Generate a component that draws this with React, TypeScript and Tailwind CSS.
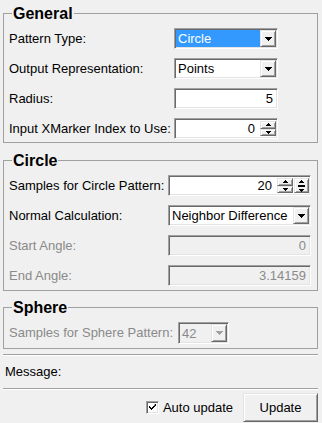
import React from "react";

const sunken =
  "border border-t-[#a0a0a0] border-l-[#a0a0a0] border-b-white border-r-white shadow-[inset_1px_1px_0_#696969,inset_-1px_-1px_0_#e3e3e3]";
const raised =
  "border border-t-[#e3e3e3] border-l-[#e3e3e3] border-b-[#696969] border-r-[#696969] shadow-[inset_1px_1px_0_#ffffff,inset_-1px_-1px_0_#a0a0a0] bg-[#f0f0f0]";

function Down({ color = "#000" }: { color?: string }) {
  return (
    <svg width="7" height="4" viewBox="0 0 7 4" className="block">
      <path d="M0 0h7v1h-1v1h-1v1h-1v1h-1v-1h-1v-1h-1v-1h-1z" fill={color} />
    </svg>
  );
}

function Tri({ up }: { up?: boolean }) {
  return (
    <svg width="5" height="3" viewBox="0 0 5 3" className="block">
      {up ? (
        <path d="M2 0h1v1h1v1h1v1h-5v-1h1v-1h1z" fill="#000" />
      ) : (
        <path d="M0 0h5v1h-1v1h-1v1h-1v-1h-1v-1h-1z" fill="#000" />
      )}
    </svg>
  );
}

function Combo({
  value,
  selected,
  disabled,
  w,
}: {
  value: string;
  selected?: boolean;
  disabled?: boolean;
  w: string;
}) {
  return (
    <div className={`${sunken} ${w} h-[21px] flex p-px ${disabled ? "bg-[#f0f0f0]" : "bg-white"}`}>
      <div
        className={`flex-1 flex items-center pl-[2px] leading-none ${
          selected ? "bg-[#3399ff] text-white" : disabled ? "text-[#8a8a8a]" : "text-black"
        }`}
      >
        {value}
      </div>
      <div className={`${raised} w-[16px] flex items-center justify-center`}>
        <Down color={disabled ? "#a0a0a0" : "#000"} />
      </div>
    </div>
  );
}

function Field({ value, disabled, w, children }: { value: string; disabled?: boolean; w: string; children?: React.ReactNode }) {
  return (
    <div className={`${sunken} ${w} h-[21px] flex p-px ${disabled ? "bg-[#f0f0f0]" : "bg-white"}`}>
      <div
        className={`flex-1 flex items-center justify-end pr-[3px] leading-none ${
          disabled ? "text-[#8a8a8a]" : "text-black"
        }`}
      >
        {value}
      </div>
      {children}
    </div>
  );
}

function Spin() {
  return (
    <div className="w-[16px] flex flex-col my-px ml-[2px]">
      <div className={`${raised} flex-1 flex items-center justify-center`}>
        <Tri up />
      </div>
      <div className={`${raised} flex-1 flex items-center justify-center`}>
        <Tri />
      </div>
    </div>
  );
}

function Spin2() {
  return (
    <div className={`${raised} w-[15px] my-px ml-px flex flex-col items-center justify-center gap-[2px]`}>
      <Tri up />
      <div className="w-[7px] h-[2px] bg-black" />
      <Tri />
    </div>
  );
}

function Group({ title, children, className = "" }: { title: string; children: React.ReactNode; className?: string }) {
  return (
    <fieldset className={`border border-[#a0a0a0] ${className}`}>
      <legend className="ml-[8px] px-[1px] text-[16px] font-bold leading-[17px] text-black">{title}</legend>
      {children}
    </fieldset>
  );
}

function Label({ children, disabled }: { children: React.ReactNode; disabled?: boolean }) {
  return (
    <div className={`h-[21px] flex items-center whitespace-nowrap ${disabled ? "text-[#8a8a8a]" : "text-black"}`}>
      {children}
    </div>
  );
}

export default function App() {
  return (
    <div className="w-[322px] h-[423px] overflow-hidden bg-[#f0f0f0] pl-[3px] pr-[4px] pt-[5px] flex flex-col text-[13px] font-['Liberation_Sans',Arial,sans-serif]">
      <Group title="General">
        <div className="pt-[6px] pl-[5px] pb-[3px] grid grid-cols-[165px_104px] gap-y-[9px]">
          <Label>Pattern Type:</Label>
          <Combo value="Circle" selected w="w-[104px]" />
          <Label>Output Representation:</Label>
          <Combo value="Points" w="w-[104px]" />
          <Label>Radius:</Label>
          <Field value="5" w="w-[104px]" />
          <Label>Input XMarker Index to Use:</Label>
          <Field value="0" w="w-[104px]">
            <Spin />
          </Field>
        </div>
      </Group>

      <Group title="Circle" className="mt-[9px]">
        <div className="pt-[6px] pl-[5px] pb-[4px] grid grid-cols-[159px_143px] gap-y-[9px]">
          <Label>Samples for Circle Pattern:</Label>
          <Field value="20" w="w-[143px]">
            <Spin />
            <Spin2 />
          </Field>
          <Label>Normal Calculation:</Label>
          <Combo value="Neighbor Difference" w="w-[143px]" />
          <Label disabled>Start Angle:</Label>
          <Field value="0" disabled w="w-[143px]" />
          <Label disabled>End Angle:</Label>
          <Field value="3.14159" disabled w="w-[143px]" />
        </div>
      </Group>

      <Group title="Sphere" className="mt-[8px]">
        <div className="pt-[6px] pl-[5px] pb-[4px] grid grid-cols-[169px_51px] items-center">
          <Label disabled>Samples for Sphere Pattern:</Label>
          <div className="h-[22px] flex">
            <Combo value="42" disabled w="w-[51px] !h-[22px]" />
          </div>
        </div>
      </Group>

      <div className="mt-[5px] border-t border-t-[#a0a0a0] border-b border-b-white" />
      <div className="h-[32px] flex items-center pl-[2px] text-black">Message:</div>
      <div className="border-t border-t-[#a0a0a0] border-b border-b-white" />

      <div className="mt-[3px] flex items-center justify-end gap-[10px]">
        <label className="flex items-center gap-[4px] text-black">
          <span className={`${sunken} w-[13px] h-[13px] bg-white flex items-center justify-center`}>
            <svg width="7" height="7" viewBox="0 0 7 7" className="block">
              <path d="M6 0h1v2h-1v1h-1v1h-1v1h-1v1h-1v-1h-1v-1h-1v-2h1v1h1v1h1v-1h1v-1h1z" fill="#000" />
            </svg>
          </span>
          Auto update
        </label>
        <button className={`${raised} w-[75px] h-[29px] text-black text-[13px] font-['Liberation_Sans',Arial,sans-serif]`}>
          Update
        </button>
      </div>
    </div>
  );
}
